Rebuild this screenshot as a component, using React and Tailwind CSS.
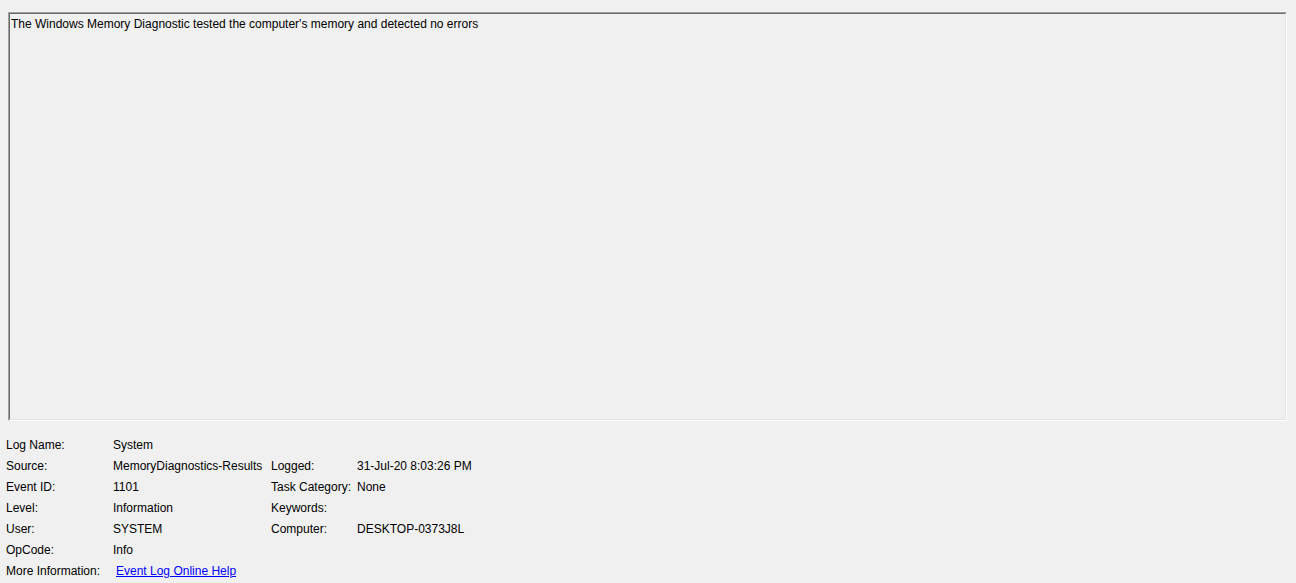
export default function App() {
  const rows = [
    ['Log Name:', 'System', '', ''],
    ['Source:', 'MemoryDiagnostics-Results', 'Logged:', '31-Jul-20 8:03:26 PM'],
    ['Event ID:', '1101', 'Task Category:', 'None'],
    ['Level:', 'Information', 'Keywords:', ''],
    ['User:', 'SYSTEM', 'Computer:', 'DESKTOP-0373J8L'],
    ['OpCode:', 'Info', '', ''],
  ]

  return (
    <div className="w-[1296px] h-[583px] bg-[#f0f0f0] text-[12px] text-black font-['Liberation_Sans',Arial,sans-serif] overflow-hidden">
      {/* description box */}
      <div className="ml-[8px] mt-[12px] w-[1279px] h-[409px] border-t border-l border-t-[#a0a0a0] border-l-[#a0a0a0] border-r border-b border-r-white border-b-white">
        <div className="h-full border-t border-l border-t-[#696969] border-l-[#696969] border-r border-b border-r-[#e3e3e3] border-b-[#e3e3e3] px-[1px] pt-[3px] leading-[15px]">
          The Windows Memory Diagnostic tested the computer's memory and detected no errors
        </div>
      </div>

      {/* properties */}
      <div className="ml-[6px] mt-[14px] grid grid-cols-[107px_158px_86px_auto] auto-rows-[21px] items-center leading-[15px]">
        {rows.map((r, i) => (
          <div key={i} className="contents">
            <span>{r[0]}</span>
            <span>{r[1]}</span>
            <span>{r[2]}</span>
            <span>{r[3]}</span>
          </div>
        ))}
        <span>More Information:</span>
        <span className="pl-[3px]">
          <a href="#" className="text-[#0000ff] underline">Event Log Online Help</a>
        </span>
      </div>
    </div>
  )
}
